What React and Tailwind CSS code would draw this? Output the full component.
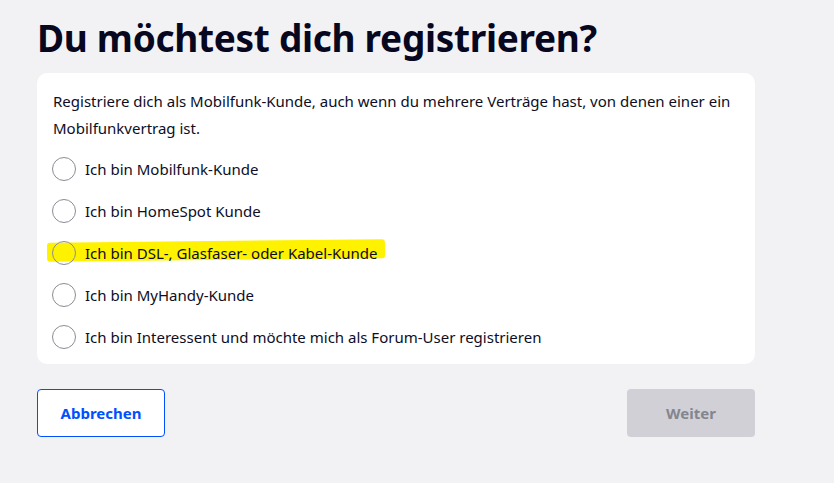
import { useState } from 'react';

const options = [
  'Ich bin Mobilfunk-Kunde',
  'Ich bin HomeSpot Kunde',
  'Ich bin DSL-, Glasfaser- oder Kabel-Kunde',
  'Ich bin MyHandy-Kunde',
  'Ich bin Interessent und möchte mich als Forum-User registrieren',
];

export default function App() {
  const [selected, setSelected] = useState(null);

  return (
    <div className="min-h-[483px] w-full bg-[#f2f2f4] px-[37px] pt-[14px] text-[#0d0d26]" style={{ fontFamily: '"Noto Sans", sans-serif' }}>
      <h1 className="text-[37px] font-bold leading-[48px] tracking-[-0.3px] text-[#07071f]">Du möchtest dich registrieren?</h1>

      <div className="mt-[11px] w-[718px] rounded-[10px] bg-white pl-[15px] pr-4 pt-[15px] pb-[6px]">
        <p className="pl-px text-[15px] leading-[27px]">
          Registriere dich als Mobilfunk-Kunde, auch wenn du mehrere Verträge hast, von denen einer ein Mobilfunkvertrag ist.
        </p>

        <div className="mt-[6px] flex flex-col">
          {options.map((label, i) => (
            <label key={label} className="relative flex h-[42px] cursor-pointer items-center gap-[9px]">
              {i === 2 && (
                <span className="absolute left-[-5px] top-[9px] h-[19px] w-[338px] -rotate-[0.6deg] rounded-[3px] bg-[#fff200]" />
              )}
              <span
                onClick={() => setSelected(i)}
                className="relative flex h-[24px] w-[24px] shrink-0 items-center justify-center rounded-full border border-[#8c8c96] bg-transparent"
              >
                {selected === i && <span className="h-3 w-3 rounded-full bg-[#0050ff]" />}
              </span>
              <span className="relative text-[15px]">{label}</span>
            </label>
          ))}
        </div>
      </div>

      <div className="mt-[25px] flex w-[718px] items-center justify-between">
        <button className="h-[48px] w-[128px] rounded-[4px] border border-[#0050ff] bg-white text-[15px] font-bold text-[#0050ff]">
          Abbrechen
        </button>
        <button disabled className="h-[48px] w-[128px] rounded-[4px] bg-[#d0d0d6] text-[15px] font-bold text-[#85858f]">
          Weiter
        </button>
      </div>
    </div>
  );
}
